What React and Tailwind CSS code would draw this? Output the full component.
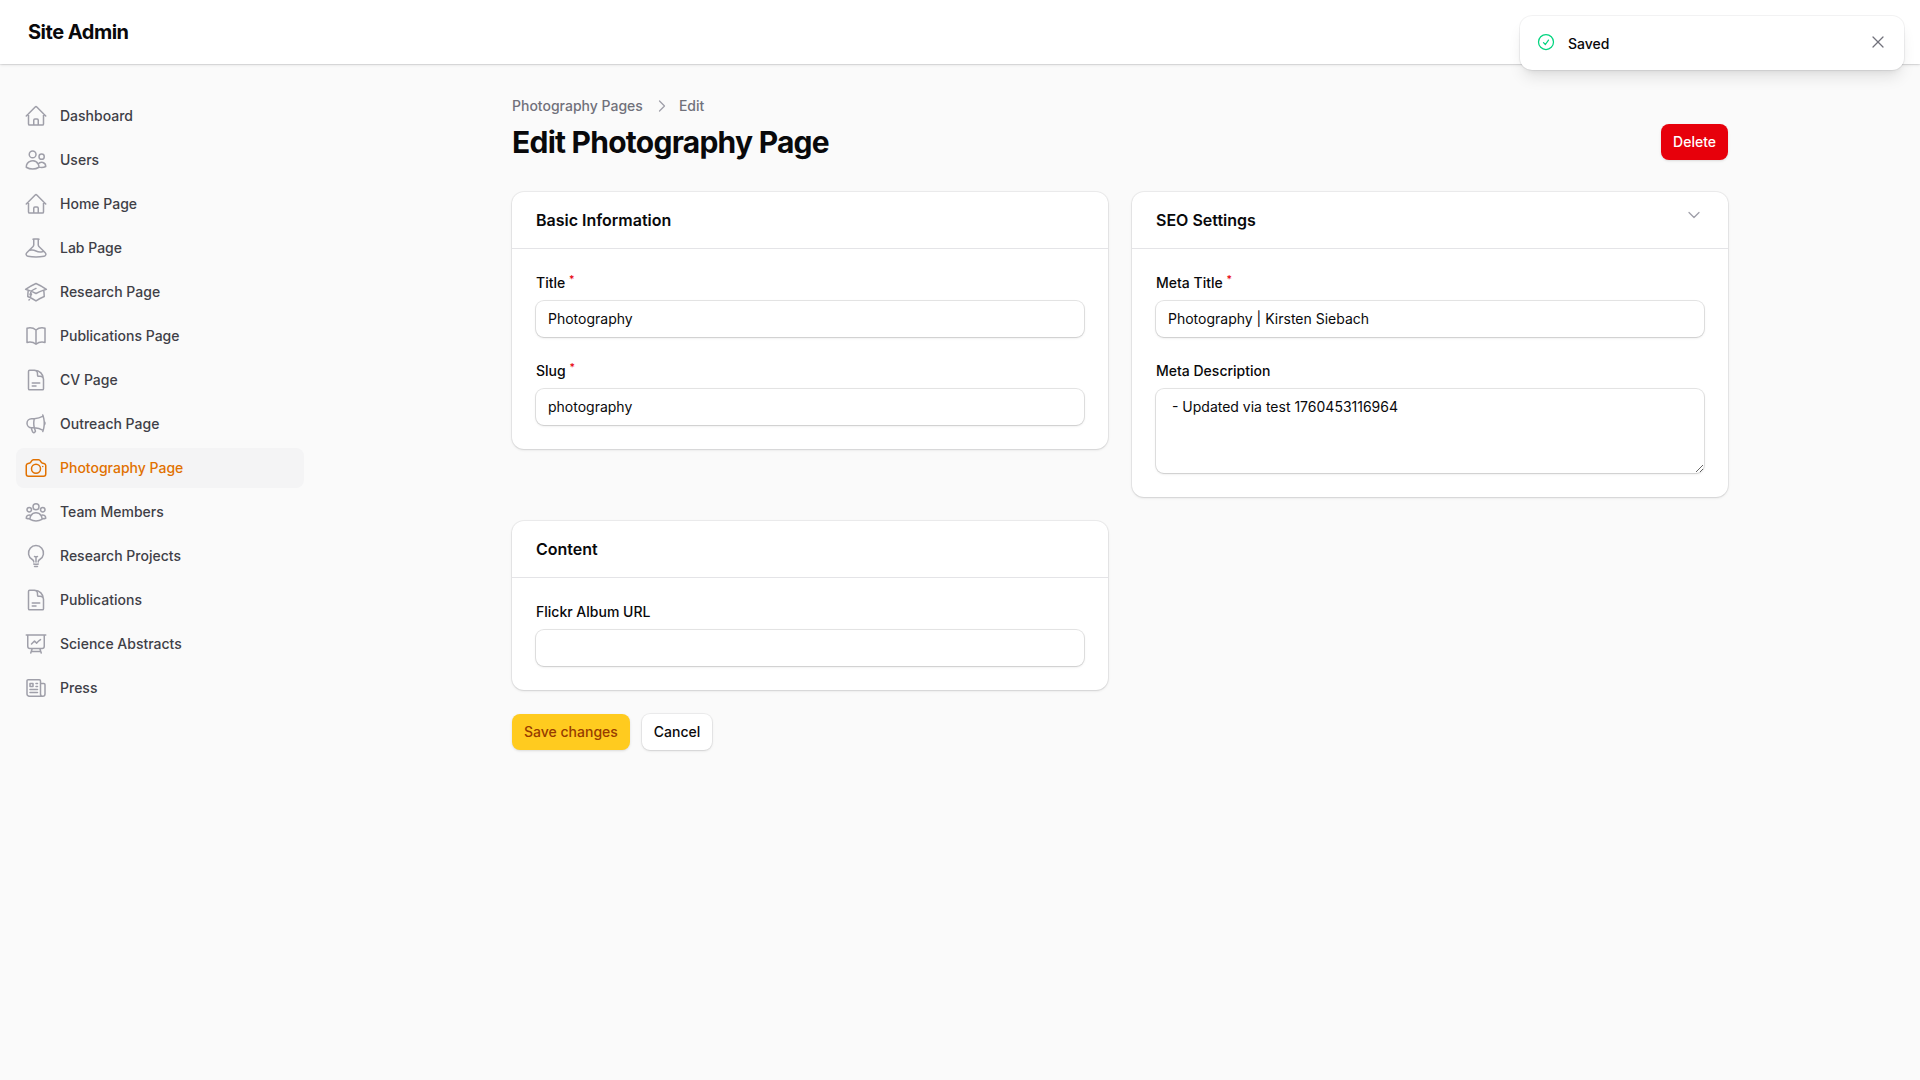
import { ChevronDown, ChevronRight, X } from 'lucide-react';
import {
  HiOutlineHome, HiOutlineUsers, HiOutlineBeaker, HiOutlineAcademicCap, HiOutlineBookOpen,
  HiOutlineDocumentText, HiOutlineMegaphone, HiOutlineCamera, HiOutlineUserGroup, HiOutlineLightBulb,
  HiOutlinePresentationChartLine, HiOutlineNewspaper, HiOutlineCheckCircle,
} from 'react-icons/hi2';

const navItems = [
  { label: 'Dashboard', icon: HiOutlineHome },
  { label: 'Users', icon: HiOutlineUsers },
  { label: 'Home Page', icon: HiOutlineHome },
  { label: 'Lab Page', icon: HiOutlineBeaker },
  { label: 'Research Page', icon: HiOutlineAcademicCap },
  { label: 'Publications Page', icon: HiOutlineBookOpen },
  { label: 'CV Page', icon: HiOutlineDocumentText },
  { label: 'Outreach Page', icon: HiOutlineMegaphone },
  { label: 'Photography Page', icon: HiOutlineCamera, active: true },
  { label: 'Team Members', icon: HiOutlineUserGroup },
  { label: 'Research Projects', icon: HiOutlineLightBulb },
  { label: 'Publications', icon: HiOutlineDocumentText },
  { label: 'Science Abstracts', icon: HiOutlinePresentationChartLine },
  { label: 'Press', icon: HiOutlineNewspaper },
];

const Card = ({ title, action, children }) => (
  <section className="relative rounded-xl bg-white shadow-sm ring-1 ring-zinc-950/5">
    <header className="px-6 py-4">
      <h2 className="text-base leading-6 font-semibold text-zinc-950">{title}</h2>
    </header>
    {action}
    <div className="flex flex-col gap-6 border-t border-zinc-200 p-6">{children}</div>
  </section>
);

const Field = ({ label, required, children }) => (
  <div className="flex flex-col gap-2">
    <label className="text-sm leading-5 font-medium text-zinc-950">
      {label}
      {required && <sup className="ml-px font-medium text-red-600"> *</sup>}
    </label>
    {children}
  </div>
);

const TextInput = ({ value }) => (
  <input
    readOnly
    value={value}
    className="h-9 w-full rounded-lg bg-white px-3 pt-[5px] pb-[7px] text-sm leading-6 text-zinc-950 shadow-sm ring-1 ring-zinc-950/10 outline-none"
  />
);

export default function App() {
  return (
    <div className="relative flex min-h-screen flex-col bg-[#fafafa] font-['Inter',sans-serif]">
      <header className="flex h-16 items-center bg-white px-7 shadow-sm ring-1 ring-zinc-950/5">
        <span className="text-xl leading-5 font-bold tracking-tight text-zinc-950">Site Admin</span>
      </header>

      <div className="flex flex-1">
        <aside className="w-80 shrink-0 px-4 py-8">
          <nav className="flex flex-col gap-1">
            {navItems.map(({ label, icon: Icon, active }) => (
              <a
                key={label}
                className={`flex h-10 items-center gap-3 rounded-lg px-2 text-sm font-medium ${active ? 'bg-zinc-100 text-[#e17100]' : 'text-zinc-700'}`}
              >
                <Icon size={24} className={active ? 'text-[#e17100]' : 'text-zinc-400'} />
                <span>{label}</span>
              </a>
            ))}
          </nav>
        </aside>

        <main className="flex-1">
          <div className="mx-auto max-w-7xl px-8 py-8">
            <nav className="flex items-center gap-2 text-sm leading-5 font-medium text-zinc-500">
              <span>Photography Pages</span>
              <ChevronRight size={20} strokeWidth={1.5} className="translate-x-px text-zinc-400" />
              <span>Edit</span>
            </nav>

            <div className="mt-2 flex items-center justify-between">
              <h1 className="text-3xl leading-9 font-bold tracking-tight text-zinc-950">Edit Photography Page</h1>
              <button className="h-9 rounded-lg bg-red-600 px-3 text-sm font-medium text-white shadow-sm">Delete</button>
            </div>

            <div className="mt-8 grid grid-cols-2 items-start gap-6">
              <Card title="Basic Information">
                <Field label="Title" required><TextInput value="Photography" /></Field>
                <Field label="Slug" required><TextInput value="photography" /></Field>
              </Card>

              <Card
                title="SEO Settings"
                action={<ChevronDown size={20} strokeWidth={1.5} className="absolute top-[13px] right-6 text-zinc-400" />}
              >
                <Field label="Meta Title" required><TextInput value="Photography | Kirsten Siebach" /></Field>
                <Field label="Meta Description">
                  <textarea
                    readOnly
                    value=" - Updated via test 1760453116964"
                    className="block h-[84px] w-full rounded-lg bg-white px-3 py-1.5 text-sm leading-6 text-zinc-950 shadow-sm ring-1 ring-zinc-950/10 outline-none"
                  />
                </Field>
              </Card>

              <Card title="Content">
                <Field label="Flickr Album URL"><TextInput value="" /></Field>
              </Card>
            </div>

            <div className="mt-6 flex gap-3">
              <button className="h-9 rounded-lg bg-[#ffcb1f] px-3 text-sm font-medium text-[#973c00] shadow-sm">Save changes</button>
              <button className="h-9 rounded-lg bg-white px-3 text-sm font-medium text-zinc-950 shadow-sm ring-1 ring-zinc-950/5">Cancel</button>
            </div>
          </div>
        </main>
      </div>

      <div className="absolute top-4 right-4 flex w-96 items-start gap-3 rounded-xl bg-white p-4 shadow-lg ring-1 ring-zinc-950/5">
        <HiOutlineCheckCircle size={20} className="shrink-0 text-[#00d47e]" />
        <span className="mt-0.5 flex-1 text-sm leading-5 font-medium text-zinc-950">Saved</span>
        <X size={20} strokeWidth={1.5} className="shrink-0 text-zinc-500" />
      </div>
    </div>
  );
}
